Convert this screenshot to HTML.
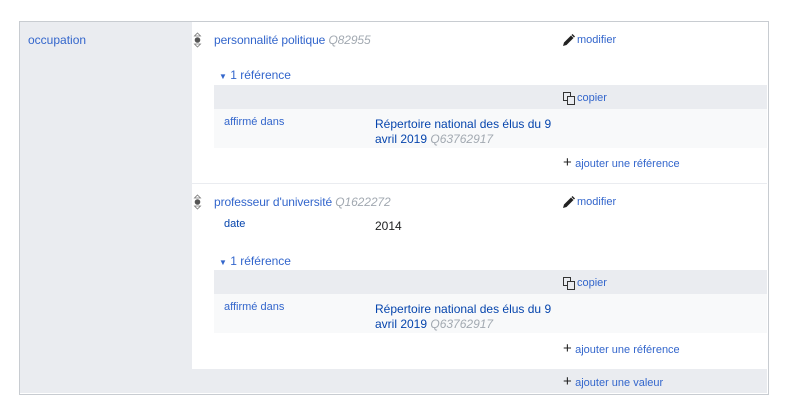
<!DOCTYPE html>
<html><head><meta charset="utf-8"><style>
body{margin:0;width:800px;height:406px;background:#fff;font-family:"Liberation Sans",sans-serif;font-size:12px;position:relative;overflow:hidden}
.a{position:absolute;white-space:nowrap}
.l{color:#3366cc}
.v{color:#0645ad}
.g{color:#a2a9b1;font-style:italic}
.s{font-size:11px}
</style></head><body>
<div class="a" style="left:19px;top:21px;width:748px;height:372px;border:1px solid #c8ccd1;"></div>
<div class="a" style="left:20px;top:22px;width:172px;height:371px;background:#eaecf0"></div>
<div class="a l" style="left:28px;top:33px">occupation</div>
<!-- statement 1 -->
<svg class="a" style="left:193px;top:32px" width="9" height="16" viewBox="0 0 9 16"><path d="M4.5 1L7.5 4H1.5z" fill="none" stroke="#777" stroke-width="0.8"/><circle cx="4.5" cy="8" r="2.8" fill="#555"/><path d="M4.5 15L7.5 12H1.5z" fill="none" stroke="#777" stroke-width="0.8"/></svg>
<div class="a" style="left:214px;top:33px;letter-spacing:-0.1px"><span class="l">personnalité politique</span> <span class="g">Q82955</span></div>
<svg class="a" style="left:562px;top:34px" width="13" height="13" viewBox="0 0 13 13"><path d="M1 12l1-3.5 7-7 2.5 2.5-7 7z" fill="#222"/><path d="M9.5 1l1-1 2.5 2.5-1 1z" fill="#222"/></svg>
<div class="a l s" style="left:577px;top:34px">modifier</div>
<div class="a l" style="left:219px;top:68px"><span style="font-size:8px">▼</span> 1 référence</div>
<div class="a" style="left:214px;top:85px;width:553px;height:24px;background:#eaecf0"></div>
<div class="a" style="left:214px;top:109px;width:553px;height:39px;background:#f8f9fa"></div>
<svg class="a" style="left:563px;top:92px" width="13" height="13" viewBox="0 0 13 13"><rect x="0.5" y="0.5" width="7" height="8" fill="none" stroke="#333"/><rect x="4.5" y="4.5" width="7" height="8" fill="#eaecf0" stroke="#333"/></svg>
<div class="a l s" style="left:577px;top:92px">copier</div>
<div class="a l s" style="left:224px;top:116px">affirmé dans</div>
<div class="a" style="left:375px;top:117px;line-height:15px"><span class="v">Répertoire national des élus du 9<br>avril 2019</span> <span class="g">Q63762917</span></div>
<div class="a" style="left:563px;top:154px"><span style="font-size:15px;color:#222">+</span> <span class="l s">ajouter une référence</span></div>
<div class="a" style="left:192px;top:183px;width:575px;height:1px;background:#eaecf0"></div>
<!-- statement 2 -->
<svg class="a" style="left:193px;top:194px" width="9" height="16" viewBox="0 0 9 16"><path d="M4.5 1L7.5 4H1.5z" fill="none" stroke="#777" stroke-width="0.8"/><circle cx="4.5" cy="8" r="2.8" fill="#555"/><path d="M4.5 15L7.5 12H1.5z" fill="none" stroke="#777" stroke-width="0.8"/></svg>
<div class="a" style="left:214px;top:195px;letter-spacing:-0.1px"><span class="l">professeur d'université</span> <span class="g">Q1622272</span></div>
<svg class="a" style="left:562px;top:196px" width="13" height="13" viewBox="0 0 13 13"><path d="M1 12l1-3.5 7-7 2.5 2.5-7 7z" fill="#222"/><path d="M9.5 1l1-1 2.5 2.5-1 1z" fill="#222"/></svg>
<div class="a l s" style="left:577px;top:196px">modifier</div>
<div class="a v s" style="left:224px;top:218px">date</div>
<div class="a" style="left:375px;top:219px;color:#202122">2014</div>
<div class="a l" style="left:219px;top:254px"><span style="font-size:8px">▼</span> 1 référence</div>
<div class="a" style="left:214px;top:270px;width:553px;height:24px;background:#eaecf0"></div>
<div class="a" style="left:214px;top:294px;width:553px;height:39px;background:#f8f9fa"></div>
<svg class="a" style="left:563px;top:277px" width="13" height="13" viewBox="0 0 13 13"><rect x="0.5" y="0.5" width="7" height="8" fill="none" stroke="#333"/><rect x="4.5" y="4.5" width="7" height="8" fill="#eaecf0" stroke="#333"/></svg>
<div class="a l s" style="left:577px;top:277px">copier</div>
<div class="a l s" style="left:224px;top:301px">affirmé dans</div>
<div class="a" style="left:375px;top:302px;line-height:15px"><span class="v">Répertoire national des élus du 9<br>avril 2019</span> <span class="g">Q63762917</span></div>
<div class="a" style="left:563px;top:340px"><span style="font-size:15px;color:#222">+</span> <span class="l s">ajouter une référence</span></div>
<div class="a" style="left:192px;top:369px;width:575px;height:24px;background:#eaecf0"></div>
<div class="a" style="left:563px;top:373px"><span style="font-size:15px;color:#222">+</span> <span class="l s">ajouter une valeur</span></div>
</body></html>
